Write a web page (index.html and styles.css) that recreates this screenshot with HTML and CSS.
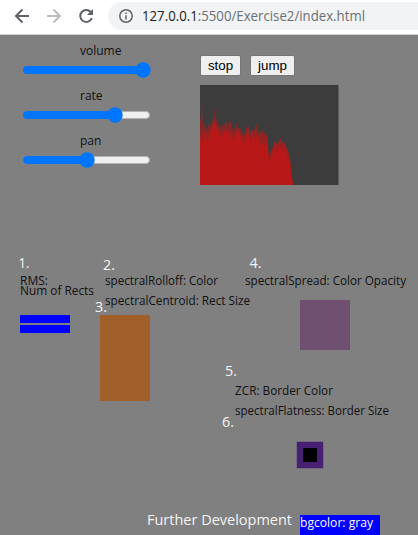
FILE: index.html
```html
<!DOCTYPE html>
<html lang="en">
<head>
<meta charset="utf-8">
<title>Exercise2</title>
<link rel="stylesheet" href="styles.css">
</head>
<body>
<header class="toolbar">
  <svg class="nav" width="108" height="34" viewBox="0 0 108 34" fill="none" stroke-width="2">
    <path d="M29 16H16.500M22.500 9.500L16 16L22.500 22.500" stroke="#5f6368"/>
    <path d="M47 16H59.500M53.500 9.500L60 16L53.500 22.500" stroke="#babcbe"/>
    <path d="M91.200 12.500A6 6 0 1 0 91.900 18" stroke="#5f6368"/>
    <path d="M93 9V15H87Z" fill="#5f6368"/>
  </svg>
  <div class="address">
    <svg width="16" height="16" viewBox="0 0 16 16" fill="none" stroke="#5f6368" stroke-width="1.500">
      <circle cx="8" cy="8" r="6.200"/>
      <path d="M8 7.200V11.500M8 4.500V6"/>
    </svg>
    <svg class="url" width="240" height="28">
      <text x="0" y="19" textLength="223" lengthAdjust="spacingAndGlyphs"><tspan class="host">127.0.0.1</tspan>:5500/Exercise2/index.html</text>
    </svg>
  </div>
</header>
<main class="page">
  <section class="controls">
    <div class="sliders">
      <div class="slider"><span class="name">volume</span><svg width="129" height="16"><rect class="fill" x="0" y="4" width="127" height="8" rx="4"/><circle class="fill" cx="120" cy="8" r="7.700"/></svg></div>
      <div class="slider"><span class="name">rate</span><svg width="129" height="16"><rect class="track" x=".5" y="4.500" width="126" height="7" rx="3.500"/><rect class="fill" x="0" y="4" width="92" height="8" rx="4"/><circle class="fill" cx="92" cy="8" r="7.700"/></svg></div>
      <div class="slider"><span class="name">pan</span><svg width="129" height="16"><rect class="track" x=".5" y="4.500" width="126" height="7" rx="3.500"/><rect class="fill" x="0" y="4" width="64" height="8" rx="4"/><circle class="fill" cx="64" cy="8" r="7.700"/></svg></div>
    </div>
    <div class="player">
      <div class="buttons"><button class="stop">stop</button><button class="jump">jump</button></div>
      <svg class="spectrum" width="139" height="100" viewBox="0 0 139 100">
        <defs>
          <linearGradient id="fade" gradientUnits="userSpaceOnUse" x1="0" y1="12" x2="0" y2="60">
            <stop offset="0" stop-color="#b81818" stop-opacity=".25"/>
            <stop offset="1" stop-color="#b81818" stop-opacity=".8"/>
          </linearGradient>
        </defs>
        <rect width="138.500" height="100" fill="#3c3c3c"/>
        <path fill="url(#fade)" d="M0 100V32L1 35L2 13L3 42L5 39L7 46L9 38L11 41L13 34L14.500 24L16 32L18 37L20 45L22 39L24 41L26 36L28 40L30 35L32 40L33 47L35 43L36 37L38 43L40 43L42 48L44 51L46 44L48 40L50 47L52 44L54 47L56 38L58 46L60 49L62 44L64 50L66 47L68 58L69 74L71 66L73 62L75 56L77 60L79 56L81 53L82 58L84 57L86 61L88 66L90 73L91 81L93 100Z"/>
        <path fill="#b81818" d="M0 100V51L1 54L3 57L4 46L6 53L8 55L10 47L12 46L14 36L16 41L18 43L20 52L22 47L23 52L25 43L27 48L29 45L31 52L33 56L35 51L37 45L39 49L41 52L43 57L45 57L47 49L49 51L51 56L53 50L55 54L57 49L59 57L61 59L63 58L65 63L66 57L68 67L69 78L71 73L73 69L75 63L77 68L79 63L81 61L83 66L85 64L87 71L89 76L90 84L92 93L93 100Z"/>
        <path stroke="#a91b1b" stroke-width=".6" opacity=".5" d="M3.500 59V100M12.500 58V100M21.500 60V100M30.500 60V100M42.500 65V100M53.500 62V100M64.500 66V100M76.500 75V100"/>
      </svg>
    </div>
  </section>
  <svg class="sketch" width="418" height="295" viewBox="0 240 418 295">
    <rect x="20" y="315" width="50" height="8" fill="#00f"/>
    <rect x="20" y="325" width="50" height="8" fill="#00f"/>
    <rect x="100" y="315" width="50" height="86" fill="#a15f2a"/>
    <rect x="300" y="300" width="50" height="50" fill="#705070"/>
    <rect x="296.500" y="441.500" width="27" height="27" fill="#68537c"/>
    <rect x="297" y="442" width="26" height="26" fill="#482073"/>
    <rect x="303" y="448" width="14" height="14" fill="#000"/>
    <rect x="300" y="515" width="80" height="20" fill="#00f"/>
    <g class="label">
      <text x="20" y="285" textLength="28" lengthAdjust="spacingAndGlyphs">RMS:</text>
      <text x="20" y="295" textLength="74" lengthAdjust="spacingAndGlyphs">Num of Rects</text>
      <text x="105" y="285" textLength="113" lengthAdjust="spacingAndGlyphs">spectralRolloff: Color</text>
      <text x="105" y="305" textLength="145" lengthAdjust="spacingAndGlyphs">spectralCentroid: Rect Size</text>
      <text x="245" y="285" textLength="161" lengthAdjust="spacingAndGlyphs">spectralSpread: Color Opacity</text>
      <text x="235" y="395" textLength="98" lengthAdjust="spacingAndGlyphs">ZCR: Border Color</text>
      <text x="235" y="415" textLength="154" lengthAdjust="spacingAndGlyphs">spectralFlatness: Border Size</text>
      <text class="light" x="300" y="527" textLength="73" lengthAdjust="spacingAndGlyphs">bgcolor: gray</text>
    </g>
    <g class="note">
      <text x="18.500" y="268" textLength="11" lengthAdjust="spacingAndGlyphs">1.</text>
      <text x="103" y="270" textLength="12" lengthAdjust="spacingAndGlyphs">2.</text>
      <text x="95" y="312" textLength="12" lengthAdjust="spacingAndGlyphs">3.</text>
      <text x="249.500" y="268" textLength="12" lengthAdjust="spacingAndGlyphs">4.</text>
      <text x="225" y="376" textLength="12" lengthAdjust="spacingAndGlyphs">5.</text>
      <text x="222" y="427" textLength="12" lengthAdjust="spacingAndGlyphs">6.</text>
      <text x="147" y="525" textLength="145" lengthAdjust="spacingAndGlyphs">Further Development</text>
    </g>
  </svg>
</main>
</body>
</html>
```
FILE: styles.css
```css
* { box-sizing: border-box; }
body {
  margin: 0;
  width: 418px;
  height: 535px;
  overflow: hidden;
  background: #808080;
  font-family: "Open Sans", "Noto Sans", sans-serif;
}
svg { display: block; flex: none; }
.toolbar {
  display: flex;
  height: 35px;
  background: #fff;
  border-bottom: 1px solid #cfd1d3;
}
.address {
  display: flex;
  align-items: center;
  gap: 8px;
  width: 310px;
  height: 28px;
  margin-top: 2px;
  padding-left: 10px;
  overflow: hidden;
  background: #f1f3f4;
  border-radius: 14px 0 0 14px;
}
.url { font-size: 14px; fill: #6b6f73; }
.host { fill: #202124; }
.page { height: 500px; }
.controls {
  display: flex;
  height: 205px;
  padding-left: 23px;
}
.sliders { width: 177px; padding-top: 6px; }
.slider { height: 45px; }
.name {
  display: block;
  height: 21px;
  padding-left: 57px;
  font-size: 12px;
  line-height: 19px;
  color: #111;
}
.fill { fill: #0075ff; }
.track { fill: #efefef; stroke: #b2b2b2; stroke-width: 1; }
.player { padding-top: 20px; }
.buttons { display: flex; gap: 9px; height: 30px; }
button {
  height: 21px;
  padding: 0;
  border: 1px solid #767676;
  border-radius: 2px;
  background: #efefef;
  color: #000;
  font: 13.333px "Liberation Sans", Arial, sans-serif;
}
.stop { width: 41px; }
.jump { width: 45px; }
.label { font-size: 12px; fill: #111; }
.label .light { fill: #fff; }
.note { font-size: 14.500px; fill: #f4f4f4; }
```
